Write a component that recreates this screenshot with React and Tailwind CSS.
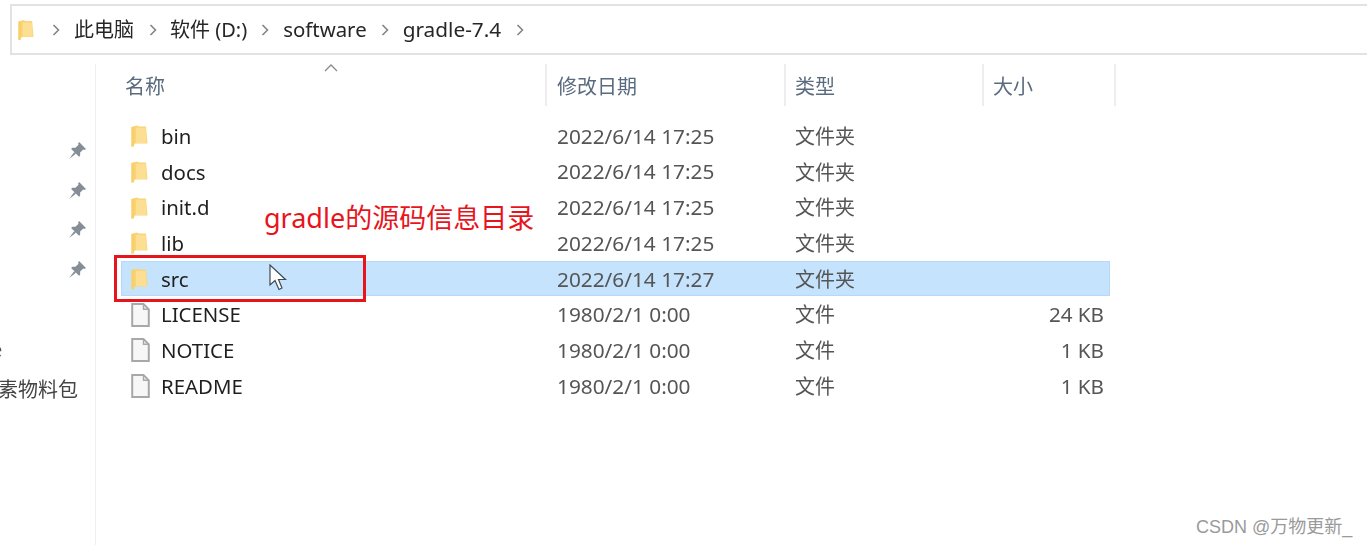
const font = "font-['Noto_Sans','Noto_Sans_CJK_SC',sans-serif]"

const files = [
  { name: 'bin', date: '2022/6/14 17:25', type: '文件夹', folder: true },
  { name: 'docs', date: '2022/6/14 17:25', type: '文件夹', folder: true },
  { name: 'init.d', date: '2022/6/14 17:25', type: '文件夹', folder: true },
  { name: 'lib', date: '2022/6/14 17:25', type: '文件夹', folder: true },
  { name: 'src', date: '2022/6/14 17:27', type: '文件夹', folder: true, selected: true },
  { name: 'LICENSE', date: '1980/2/1 0:00', type: '文件', size: '24 KB' },
  { name: 'NOTICE', date: '1980/2/1 0:00', type: '文件', size: '1 KB' },
  { name: 'README', date: '1980/2/1 0:00', type: '文件', size: '1 KB' },
]

function FolderIcon({ className = 'w-[17px] h-[22px]' }) {
  return (
    <svg viewBox="0 0 17 22" className={className}>
      <path d="M0.5 2 L6 0.5 L8 1.5 L15 1.5 L16.5 18.5 L3.5 18.5 L2.5 21.5 L0.5 21.5 Z" fill="#f9d577" />
      <path d="M5 3 L14.5 3 L15.5 18 L5 18 Z" fill="#fcdf92" />
      <path d="M0.5 2 L3.5 1.5 L3.5 18.5 L2.5 21.5 L0.5 21.5 Z" fill="#f8cf69" />
    </svg>
  )
}

function FileIcon() {
  return (
    <svg viewBox="0 0 19 24" className="w-[19px] h-[24px]">
      <path d="M1.2 1 H12.5 L17.8 6.3 V23 H1.2 Z" fill="#f7f7f7" stroke="#a8a8a8" strokeWidth="2" />
      <path d="M12.5 1 V6.3 H17.8" fill="none" stroke="#a8a8a8" strokeWidth="1.4" />
    </svg>
  )
}

function PinIcon() {
  return (
    <svg viewBox="0 0 18 18" className="w-[19px] h-[19px]">
      <path d="M10.5 1 L17 7.5 L15.5 8.5 L14.5 8 L11.5 11 L11.5 14 L10.5 15 L3 7.5 L4 6.5 L7 6.5 L10 3.5 L9.5 2.5 Z" fill="#858e96" />
      <path d="M6 10.5 L1 17 L7.5 12 Z" fill="#858e96" />
    </svg>
  )
}

function Crumb() {
  return (
    <svg viewBox="0 0 8 12" className="w-[8px] h-[12px] shrink-0">
      <path d="M1.5 1 L6.5 6 L1.5 11" fill="none" stroke="#808080" strokeWidth="1.5" />
    </svg>
  )
}

function AddressBar() {
  return (
    <div className="ml-[10px] mt-[4px] h-[51px] border-2 border-r-0 border-[#e2e2e2] flex items-center pl-[6px] text-[#262626]">
      <FolderIcon className="w-[16px] h-[22px] mr-[18px]" />
      <Crumb />
      <span className="ml-[14px] mr-[15px] text-[20px]">此电脑</span>
      <Crumb />
      <span className="ml-[13px] mr-[14px] text-[20px]">软件 (D:)</span>
      <Crumb />
      <span className="ml-[14px] mr-[14px] text-[20.4px]">software</span>
      <Crumb />
      <span className="ml-[14px] mr-[15px] text-[20.8px]">gradle-7.4</span>
      <Crumb />
    </div>
  )
}

function Sidebar() {
  return (
    <div className="w-[96px] shrink-0 border-r border-[#f0f0f0] overflow-hidden flex flex-col">
      <div className="h-[67px] shrink-0" />
      {[0, 1, 2, 3].map((i) => (
        <div key={i} className="h-[39.5px] shrink-0 flex items-center justify-end pr-[8px]">
          <PinIcon />
        </div>
      ))}
      <div className="h-[51px] shrink-0" />
      <div className="h-[20px] shrink-0 -ml-[9px] text-[20px] leading-[20px] text-[#555]">e</div>
      <div className="mt-[16px] flex justify-end pr-[17px] text-[20px] leading-[27px] whitespace-nowrap text-[#444]">
        素物料包
      </div>
    </div>
  )
}

function HeaderCell({ children, className }) {
  return <div className={`h-full flex items-center pt-[3px] border-r-2 border-[#eeeeee] ${className}`}>{children}</div>
}

function FileRow({ file }) {
  return (
    <div
      className={`h-[35.7px] grid grid-cols-[436px_238px_198px_117px] items-center pt-[1px] ${
        file.selected ? 'bg-[#c5e3fc] shadow-[inset_0_0_0_1px_#b5d9f7]' : ''
      }`}
    >
      <div className="flex items-center pl-[10px]">
        <div className="w-[30px] flex">{file.folder ? <FolderIcon /> : <FileIcon />}</div>
        <span className="text-[20.4px] text-[#1f1f1f]">{file.name}</span>
      </div>
      <span className="text-[20.8px] text-[#555555]">{file.date}</span>
      <span className="pt-[1px] text-[20px] text-[#555555]">{file.type}</span>
      <span className="text-[20.6px] text-[#555555] text-right pr-[6px]">{file.size}</span>
    </div>
  )
}

export default function App() {
  return (
    <div className={`w-[1367px] h-[545px] bg-white relative overflow-hidden ${font}`}>
      <div className="blur-[0.5px]">
        <AddressBar />
        <div className="flex h-[490px] pt-[9px]">
          <Sidebar />
          <div className="flex-1">
            <div className="ml-[25px] h-[42px] flex text-[20px] text-[#5a6b80]">
              <HeaderCell className="w-[426px] pl-[4px] relative">
                名称
                <svg viewBox="0 0 14 8" className="absolute left-[203px] top-0 w-[14px] h-[8px]">
                  <path d="M1 7 L7 1 L13 7" fill="none" stroke="#8a8a8a" strokeWidth="1.3" />
                </svg>
              </HeaderCell>
              <HeaderCell className="w-[239px] pl-[10px]">修改日期</HeaderCell>
              <HeaderCell className="w-[198px] pl-[9px]">类型</HeaderCell>
              <HeaderCell className="w-[132px] pl-[9px]">大小</HeaderCell>
            </div>
            <div className="ml-[25px] w-[989px] mt-[12px]">
              {files.map((file) => (
                <FileRow key={file.name} file={file} />
              ))}
            </div>
          </div>
        </div>
      </div>

      {/* mouse cursor */}
      <svg viewBox="0 0 18 27" className="absolute left-[269px] top-[264px] w-[18px] h-[27px]">
        <path d="M1 1 L1 21 L6 16.5 L10 25.5 L13 24 L9.5 15.5 L16.5 15.5 Z" fill="#fff" stroke="#3d4a55" strokeWidth="1.2" />
      </svg>

      {/* red annotation */}
      <div className="absolute left-[114px] top-[255px] w-[252px] h-[47px] border-[3px] border-[#e8141c]" />
      <div className="absolute left-[264px] top-[200px] text-[27px] leading-[36px] text-[#e8141c] whitespace-nowrap">
        gradle的源码信息目录
      </div>

      <div className="absolute left-[1196px] top-[516px] text-[18px] leading-[22px] text-[#9a9a9a] font-['Liberation_Sans','Noto_Sans_CJK_SC',sans-serif] whitespace-nowrap">
        CSDN @万物更新_
      </div>
    </div>
  )
}
